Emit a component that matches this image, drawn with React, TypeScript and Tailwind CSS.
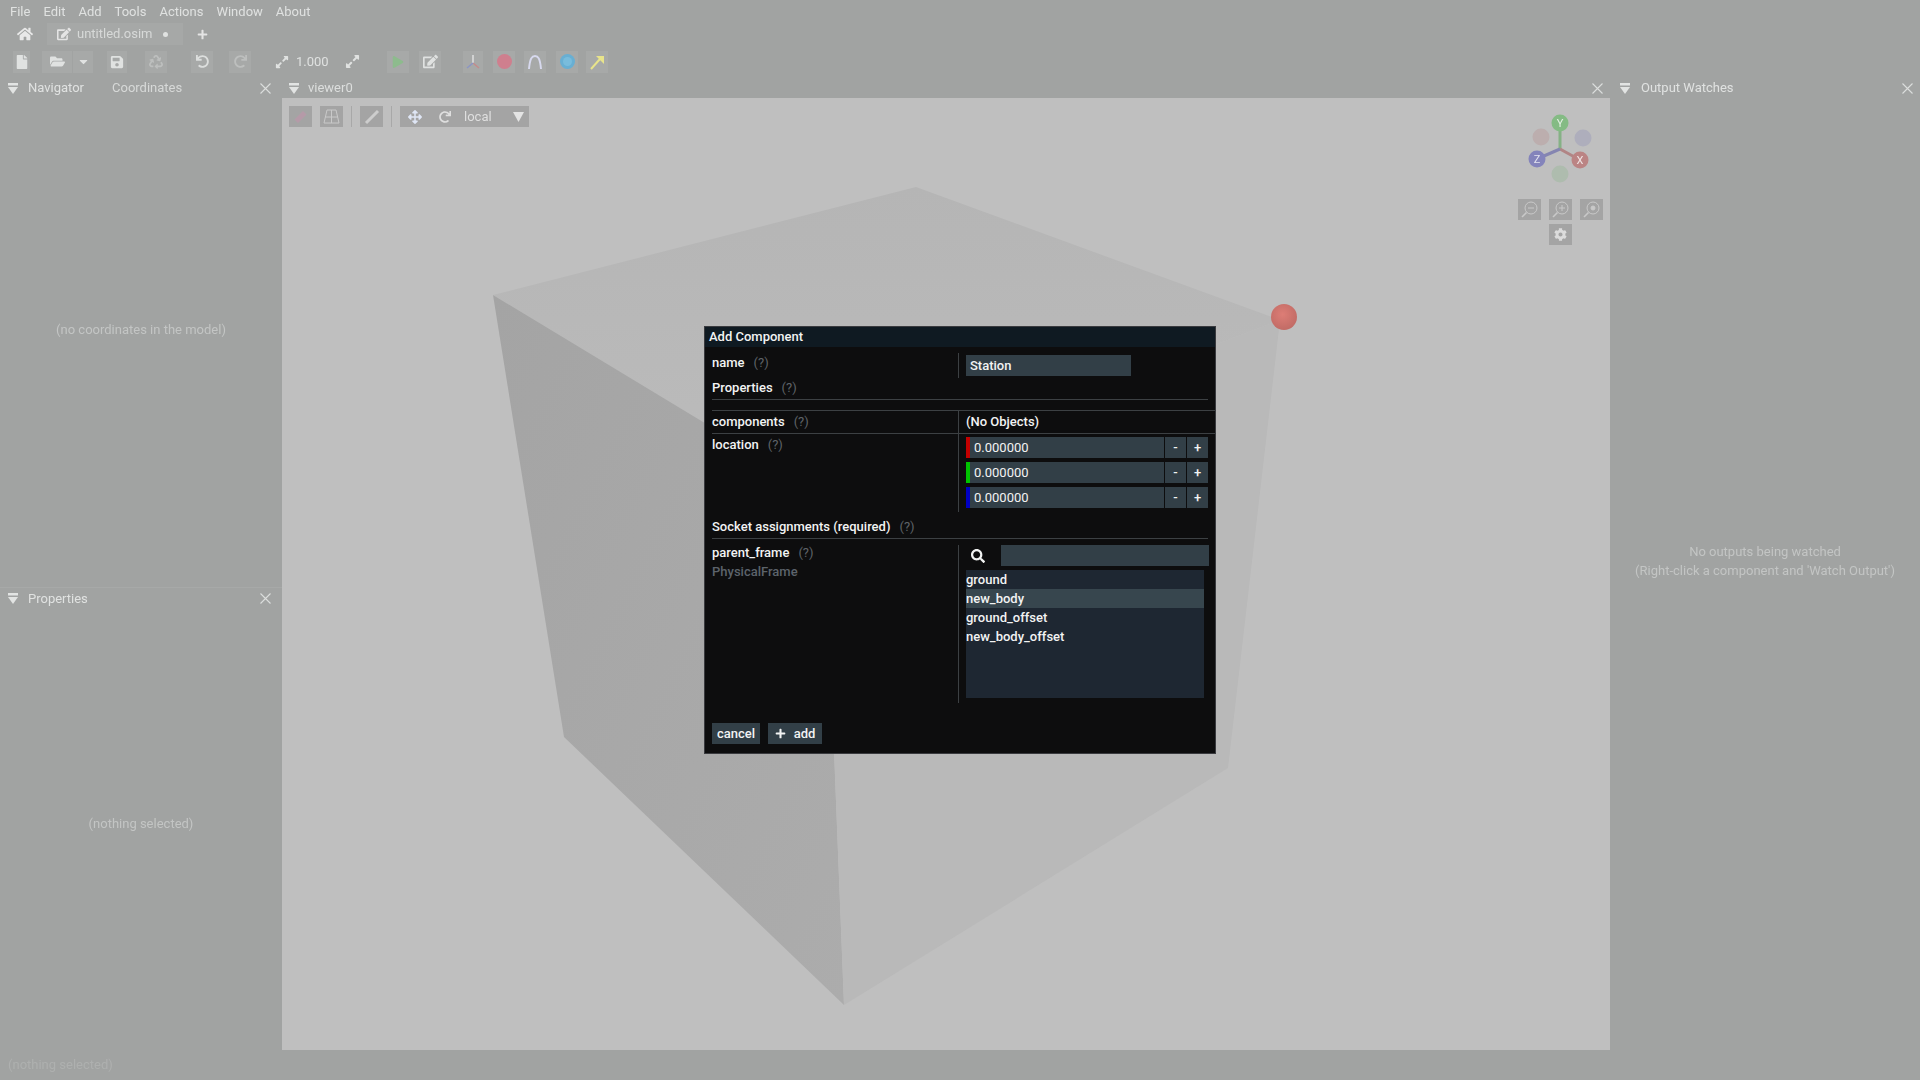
import { FaCaretDown, FaCog, FaEdit, FaExpandAlt, FaFile, FaFolderOpen, FaHome, FaPlay, FaPlus, FaRecycle, FaRedo, FaSave, FaSearch, FaTimes, FaUndo, FaArrowsAlt } from "react-icons/fa";

const menuItems = ["File", "Edit", "Add", "Tools", "Actions", "Window", "About"];
const objects = ["ground", "new_body", "ground_offset", "new_body_offset"];
const axes = ["bg-[#c30000]", "bg-[#00c300]", "bg-[#0000c3]"];

const CollapseIcon = () => (
  <svg width="10" height="11" viewBox="0 0 10 11" className="shrink-0">
    <rect x="0" y="0" width="10" height="2.5" fill="#e2e4e3" />
    <path d="M0 4 H10 L5 11 Z" fill="#e2e4e3" />
  </svg>
);

const PanelClose = () => (
  <svg width="11" height="11" viewBox="0 0 11 11" className="shrink-0">
    <path d="M0.5 0.5 L10.5 10.5 M10.5 0.5 L0.5 10.5" stroke="#dcdedd" strokeWidth="1.1" />
  </svg>
);

const Help = () => <span className="ml-[9px] font-normal text-[#5f6368]">(?)</span>;

const Rule = ({ className }: { className: string }) => <div className={`h-px bg-[#3c4043] ${className}`} />;

const ToolIcon = ({ children, className }: { children: React.ReactNode; className: string }) => (
  <div className={`flex h-[22px] items-center justify-center bg-[#a7a9a8] ${className}`}>{children}</div>
);

const ViewerButton = ({ children, className = "w-[23px]" }: { children: React.ReactNode; className?: string }) => (
  <div className={`flex h-[21px] items-center justify-center bg-[#a4a4a4] ${className}`}>{children}</div>
);

const Scene = () => (
  <svg className="absolute inset-0" width="1328" height="952" viewBox="282 98 1328 952">
    <defs>
      <linearGradient id="topFace" x1="0" y1="0" x2="0" y2="1">
        <stop offset="0" stopColor="#b5b5b5" />
        <stop offset="1" stopColor="#bcbcbc" />
      </linearGradient>
      <linearGradient id="leftFace" x1="0" y1="0" x2="1" y2="1">
        <stop offset="0" stopColor="#a4a4a4" />
        <stop offset="1" stopColor="#acacac" />
      </linearGradient>
      <radialGradient id="ball" cx="0.45" cy="0.4" r="0.65">
        <stop offset="0" stopColor="#dd7d76" />
        <stop offset="1" stopColor="#bf6a64" />
      </radialGradient>
    </defs>
    <rect x="282" y="98" width="1328" height="952" fill="#bfbfbf" />
    <polygon points="493,295 916,187 1280,320 824,495" fill="url(#topFace)" />
    <polygon points="493,295 824,495 844,1005 564,737" fill="url(#leftFace)" />
    <polygon points="824,495 1280,320 1228,768 844,1005" fill="#b9b9b9" />
    <circle cx="1284" cy="317" r="13" fill="url(#ball)" />
    {/* gizmo */}
    <circle cx="1541" cy="137" r="8.5" fill="#bcaeae" />
    <circle cx="1583" cy="138" r="8.5" fill="#aeaebc" />
    <circle cx="1560" cy="174" r="8.5" fill="#aebcae" />
    <path d="M1560 149 V123" stroke="#85b185" strokeWidth="3" />
    <path d="M1560 149 L1580 160" stroke="#b18585" strokeWidth="3" />
    <path d="M1560 149 L1537 159" stroke="#8585b1" strokeWidth="3" />
    <circle cx="1560" cy="123" r="8.5" fill="#84bb84" />
    <circle cx="1580" cy="160" r="8.5" fill="#bb8484" />
    <circle cx="1537" cy="159" r="8.5" fill="#8484bb" />
    <text x="1560" y="127" textAnchor="middle" fontSize="11" fill="#e4f0e4">Y</text>
    <text x="1580" y="164" textAnchor="middle" fontSize="11" fill="#f0e4e4">X</text>
    <text x="1537" y="163" textAnchor="middle" fontSize="11" fill="#e4e4f0">Z</text>
  </svg>
);

const ZoomGlyph = ({ mark }: { mark: "minus" | "plus" | "dot" }) => (
  <svg width="17" height="17" viewBox="0 0 17 17" fill="none" stroke="#c9c9c9" strokeWidth="1">
    <circle cx="10" cy="7" r="6" />
    <path d="M5.5 11.5 L1 16" strokeWidth="1.6" />
    {mark !== "dot" && <path d="M7 7 H13" />}
    {mark === "plus" && <path d="M10 4 V10" />}
    {mark === "dot" && <circle cx="10" cy="7" r="2" fill="#c9c9c9" />}
  </svg>
);

const Background = () => (
  <div className="flex h-[1080px] w-[1920px] flex-col overflow-hidden bg-[#a1a3a2] text-[13px] text-[#e0e2e1] blur-[0.5px]">
    <div className="flex h-[23px] items-center gap-[13px] pl-[10px]">
      {menuItems.map(item => (
        <span key={item}>{item}</span>
      ))}
    </div>

    <div className="flex h-[22px] items-center">
      <FaHome className="ml-[17px] text-[16px] text-[#e8e8e8]" />
      <div className="ml-[14px] flex h-[22px] w-[136px] items-center bg-[#a6a8a7] pl-[10px]">
        <FaEdit className="text-[14px] text-[#e4e4e4]" />
        <span className="ml-[6px] text-[#d7d9d8]">untitled.osim</span>
        <span className="ml-[10px] h-[5px] w-[5px] rounded-full bg-[#e0e2e1]" />
      </div>
      <FaPlus className="ml-[14px] text-[11px] text-[#e4e4e4]" />
    </div>

    <div className="flex h-[33px] items-center pl-[13px]">
      <ToolIcon className="w-[17px]"><FaFile className="text-[14px] text-[#e0e2e1]" /></ToolIcon>
      <ToolIcon className="ml-[12px] w-[30px]"><FaFolderOpen className="text-[15px] text-[#e0e2e1]" /></ToolIcon>
      <ToolIcon className="ml-px w-[20px]"><FaCaretDown className="text-[13px] text-[#e0e2e1]" /></ToolIcon>
      <ToolIcon className="ml-[14px] w-[20px]"><FaSave className="text-[14px] text-[#e0e2e1]" /></ToolIcon>
      <ToolIcon className="ml-[18px] w-[22px]"><FaRecycle className="text-[14px] text-[#bdbfbe]" /></ToolIcon>
      <ToolIcon className="ml-[24px] w-[22px]"><FaUndo className="text-[13px] text-[#dcdedd]" /></ToolIcon>
      <ToolIcon className="ml-[16px] w-[22px]"><FaRedo className="text-[13px] text-[#bdbfbe]" /></ToolIcon>
      <div className="ml-[24px] flex w-[70px] items-center">
        <FaExpandAlt className="text-[14px] text-[#e0e2e1]" />
        <span className="ml-[7px] text-[#dfe1e0]">1.000</span>
      </div>
      <FaExpandAlt className="text-[15px] text-[#e0e2e1]" />
      <ToolIcon className="ml-[27px] w-[22px]"><FaPlay className="text-[12px] text-[#8dbb8d]" /></ToolIcon>
      <ToolIcon className="ml-[10px] w-[22px]"><FaEdit className="text-[15px] text-[#e0e2e1]" /></ToolIcon>
      <ToolIcon className="ml-[22px] w-[20px]">
        <svg width="16" height="16" viewBox="0 0 16 16" fill="none" strokeWidth="1.5">
          <path d="M8 9 V1" stroke="#dfe1e0" />
          <path d="M8 9 L14 14" stroke="#c48b8b" />
          <path d="M8 9 L2 14" stroke="#8b95c4" />
        </svg>
      </ToolIcon>
      <ToolIcon className="ml-[10px] w-[22px]"><span className="h-[15px] w-[15px] rounded-full bg-[#cf7f8e]" /></ToolIcon>
      <ToolIcon className="ml-[9px] w-[22px]">
        <svg width="16" height="16" viewBox="0 0 16 16" fill="none">
          <path d="M2 15 C3 4 5 2 8 2 C11 2 13 4 14 15" stroke="#d7d9ee" strokeWidth="2" />
        </svg>
      </ToolIcon>
      <ToolIcon className="ml-[10px] w-[22px]">
        <span className="flex h-[15px] w-[15px] items-center justify-center rounded-full bg-[#68afd3]">
          <span className="h-[9px] w-[9px] rounded-full bg-[#79bcdc]" />
        </span>
      </ToolIcon>
      <ToolIcon className="ml-[8px] w-[22px]">
        <svg width="16" height="16" viewBox="0 0 16 16" fill="none">
          <path d="M2 15 L11 5" stroke="#e8e48b" strokeWidth="2" />
          <path d="M7 2 H15 V10 Z" fill="#e8e48b" />
        </svg>
      </ToolIcon>
    </div>

    <div className="flex min-h-0 flex-1">
      <div className="flex w-[282px] flex-col">
        <div className="flex h-[20px] items-center justify-between pl-[8px] pr-[11px]">
          <div className="flex items-center">
            <CollapseIcon />
            <span className="ml-[10px]">Navigator</span>
            <span className="ml-[28px] text-[#d7d9d8]">Coordinates</span>
          </div>
          <PanelClose />
        </div>
        <div className="flex h-[489px] items-center justify-center pb-[26px] text-[#c3c5c4]">(no coordinates in the model)</div>
        <div className="h-px bg-[#a7a9a8]" />
        <div className="flex h-[21px] items-center justify-between pl-[8px] pr-[11px]">
          <div className="flex items-center">
            <CollapseIcon />
            <span className="ml-[10px]">Properties</span>
          </div>
          <PanelClose />
        </div>
        <div className="flex flex-1 items-center justify-center pb-[12px] text-[#c3c5c4]">(nothing selected)</div>
      </div>

      <div className="flex w-[1328px] flex-col">
        <div className="flex h-[20px] items-center justify-between pl-[7px] pr-[7px]">
          <div className="flex items-center">
            <CollapseIcon />
            <span className="ml-[9px] text-[#dcdedd]">viewer0</span>
          </div>
          <PanelClose />
        </div>
        <div className="relative flex-1">
          <Scene />
          <div className="absolute left-[7px] top-[8px] flex items-center">
            <ViewerButton><span className="h-[12px] w-[5px] rotate-45 bg-[#b59aa8]" /></ViewerButton>
            <ViewerButton className="ml-[8px] w-[23px]">
              <svg width="17" height="15" viewBox="0 0 17 15" fill="none" stroke="#c9c9c9">
                <path d="M4 1 H13 L16 14 H1 Z M8.5 1 V14 M2.5 8 H14.5" />
              </svg>
            </ViewerButton>
            <div className="ml-[8px] mr-[8px] h-[21px] w-px bg-[#a8a8a8]" />
            <ViewerButton>
              <svg width="16" height="16" viewBox="0 0 16 16" fill="none" stroke="#cdcdcd" strokeWidth="3">
                <path d="M2 14 L14 2" />
              </svg>
            </ViewerButton>
            <div className="ml-[8px] mr-[8px] h-[21px] w-px bg-[#a8a8a8]" />
            <ViewerButton className="w-[30px] bg-[#93a9dd]"><FaArrowsAlt className="text-[14px] text-[#dfe6f5]" /></ViewerButton>
            <ViewerButton className="w-[99px] justify-start pl-[9px]">
              <FaRedo className="text-[12px] text-[#dfdfdf]" />
              <span className="ml-[13px] text-[#dfdfdf]">local</span>
              <svg width="11" height="10" viewBox="0 0 11 10" className="ml-[21px]">
                <path d="M0 0 H11 L5.5 10 Z" fill="#e4e4e4" />
              </svg>
            </ViewerButton>
          </div>
          <div className="absolute right-[7px] top-[101px] flex w-[85px] flex-col items-center gap-[4px]">
            <div className="flex gap-[8px]">
              <div className="flex h-[21px] w-[23px] items-center justify-center bg-[#a4a4a4]"><ZoomGlyph mark="minus" /></div>
              <div className="flex h-[21px] w-[23px] items-center justify-center bg-[#a4a4a4]"><ZoomGlyph mark="plus" /></div>
              <div className="flex h-[21px] w-[23px] items-center justify-center bg-[#a4a4a4]"><ZoomGlyph mark="dot" /></div>
            </div>
            <div className="flex h-[21px] w-[23px] items-center justify-center bg-[#a4a4a4]"><FaCog className="text-[13px] text-[#dcdcdc]" /></div>
          </div>
        </div>
      </div>

      <div className="flex flex-1 flex-col">
        <div className="flex h-[20px] items-center justify-between pl-[10px] pr-[7px]">
          <div className="flex items-center">
            <CollapseIcon />
            <span className="ml-[11px]">Output Watches</span>
          </div>
          <PanelClose />
        </div>
        <div className="flex flex-1 flex-col items-center justify-center pb-[26px] leading-[19px] text-[#c3c5c4]">
          <span>No outputs being watched</span>
          <span>(Right-click a component and 'Watch Output')</span>
        </div>
      </div>
    </div>

    <div className="flex h-[30px] shrink-0 items-center pl-[8px] text-[#aeb0af]">(nothing selected)</div>
  </div>
);

const AddComponentModal = () => (
  <div className="absolute left-[704px] top-[326px] h-[428px] w-[512px] border border-[#3a3b3f] bg-[#0d0d0e] text-[13px] font-medium text-[#f2f3f3]">
    <div className="flex h-[20px] items-center bg-[#0f1a22] pl-[4px]">Add Component</div>

    <div className="mt-[6px] flex h-[25px] pl-[7px]">
      <div className="w-[246px] leading-[20px]">name<Help /></div>
      <div className="border-l border-[#3c4043] pl-[7px] pt-[2px]">
        <div className="flex h-[21px] w-[165px] items-center bg-[#323f47] pl-[4px]">Station</div>
      </div>
    </div>
    <div className="h-[20px] pl-[7px] leading-[20px]">Properties<Help /></div>
    <Rule className="ml-[7px] mr-[7px] mt-px" />
    <Rule className="ml-[7px] mt-[10px]" />

    <div className="flex h-[22px] pl-[7px]">
      <div className="w-[246px] leading-[22px]">components<Help /></div>
      <div className="border-l border-[#3c4043] pl-[7px] leading-[22px]">(No Objects)</div>
    </div>
    <Rule className="ml-[7px]" />

    <div className="flex h-[78px] pl-[7px]">
      <div className="w-[246px] pt-px leading-[20px]">location<Help /></div>
      <div className="flex flex-col gap-[4px] border-l border-[#3c4043] pl-[7px] pt-[3px]">
        {axes.map(axis => (
          <div key={axis} className="flex h-[21px] w-[242px]">
            <div className={`w-[4px] ${axis}`} />
            <div className="flex w-[194px] items-center bg-[#323f47] pl-[4px] font-normal">0.000000</div>
            <div className="ml-px flex w-[21px] items-center justify-center bg-[#323f47]">-</div>
            <div className="ml-px flex w-[21px] items-center justify-center bg-[#323f47]">+</div>
          </div>
        ))}
      </div>
    </div>

    <div className="mt-[5px] h-[20px] pl-[7px] leading-[20px]">Socket assignments (required)<Help /></div>
    <Rule className="ml-[7px] mr-[7px] mt-px" />

    <div className="mt-[6px] flex pl-[7px]">
      <div className="-mt-[2px] w-[246px] leading-[19px]">
        <div>parent_frame<Help /></div>
        <div className="text-[#5c636b]">PhysicalFrame</div>
      </div>
      <div className="h-[158px] border-l border-[#3c4043] pl-[7px] pt-[0px]">
        <div className="flex items-center">
          <FaSearch className="ml-[5px] text-[14px] text-[#f2f3f3]" />
          <div className="ml-[16px] h-[21px] w-[208px] bg-[#323f47]" />
        </div>
        <div className="mt-[4px] h-[128px] w-[238px] bg-[#1e2732] leading-[19px]">
          {objects.map(name => (
            <div key={name} className={name === "new_body" ? "bg-[#37464e]" : ""}>{name}</div>
          ))}
        </div>
      </div>
    </div>

    <div className="ml-[7px] mt-[20px] flex gap-[8px]">
      <div className="flex h-[21px] w-[48px] items-center justify-center bg-[#323f47]">cancel</div>
      <div className="flex h-[21px] w-[54px] items-center justify-center gap-[8px] bg-[#323f47]">
        <FaPlus className="text-[11px]" />
        <span>add</span>
      </div>
    </div>
  </div>
);

export default function App() {
  return (
    <div className="relative h-[1080px] w-[1920px] overflow-hidden font-['Roboto',sans-serif]">
      <Background />
      <AddComponentModal />
    </div>
  );
}
